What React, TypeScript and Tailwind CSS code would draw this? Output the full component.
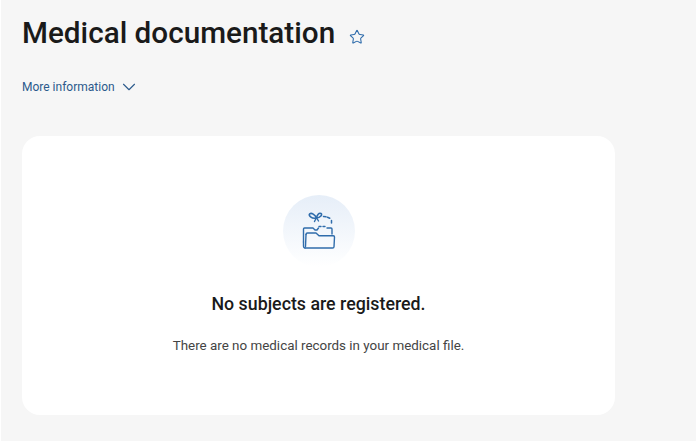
import { ChevronDown, Star } from "lucide-react";

function FolderIcon() {
  return (
    <svg width="40" height="40" viewBox="1 0 40 40" fill="none" stroke="#2f6cab" strokeWidth="1.4" strokeLinecap="round" strokeLinejoin="round">
      {/* bow */}
      <path d="M18.500 7c-1.500-3.500-5-5.500-6.800-4.200-1.700 1.500 1.800 5.200 6.800 4.200z" strokeWidth="1.6" />
      <path d="M18.500 7c.5-3 2.500-5.500 4.500-4.500 1.700 1-.5 4.200-4.500 4.500z" strokeWidth="1.6" />
      <path d="M18 7.500l-1.500 3M19 7.500l1.500 2.500" />
      {/* dashed ribbon */}
      <path d="M25.500 5.500l2.500.3M29.500 6.200l2.300 1M33.500 9.500v2.500" strokeWidth="1.5" />
      <path d="M21 15.500h2M25 15.500h2" />
      {/* back folder */}
      <path d="M5.500 31V18c0-.6.400-1 1-1h8.500l2 2h2l1.500-2M29 17h4c.6 0 1 .4 1 1v5" />
      {/* front folder */}
      <path d="M7 37h27.500c.8 0 1.500-.5 1.500-1.300l.5-9.700c0-.7-.5-1.200-1.200-1.200H21L18 22H9.500c-1 0-1.500.5-1.500 1.500" />
      <path d="M7 37c-1 0-1.500-.7-1.500-1.700V31M8 23.500l-.5 12" />
    </svg>
  );
}

export default function App() {
  return (
    <div className="h-[443px] w-[696px] overflow-hidden bg-white pl-px font-['Roboto',sans-serif]">
      <div className="h-[441px] bg-[#f6f6f6] pl-[21px] pt-[14px]">
        <div className="flex items-center">
          <h1 className="text-[29.7px] leading-[38px] font-medium text-[#1a1a1a]">Medical documentation</h1>
          <Star className="ml-[14px] mt-[8px] h-[16px] w-[16px] text-[#2f6cab]" strokeWidth={1.6} />
        </div>
        <div className="mt-[20px] flex items-center text-[12px] leading-[30px] text-[#2c5a8c]">
          <span>More information</span>
          <ChevronDown className="ml-[3px] h-[22px] w-[22px]" strokeWidth={1.2} />
        </div>
        <div className="mt-[34px] flex h-[279px] w-[593px] flex-col items-center rounded-[18px] bg-white pt-[59px]">
          <div className="flex h-[72px] w-[72px] items-center justify-center rounded-full bg-gradient-to-b from-[#e6eef8] to-white">
            <FolderIcon />
          </div>
          <h2 className="mt-[25px] text-[17.8px] leading-[24px] font-medium text-[#1a1a1a]">No subjects are registered.</h2>
          <p className="mt-[20px] text-[13.4px] leading-[20px] text-[#444444]">There are no medical records in your medical file.</p>
        </div>
      </div>
    </div>
  );
}
